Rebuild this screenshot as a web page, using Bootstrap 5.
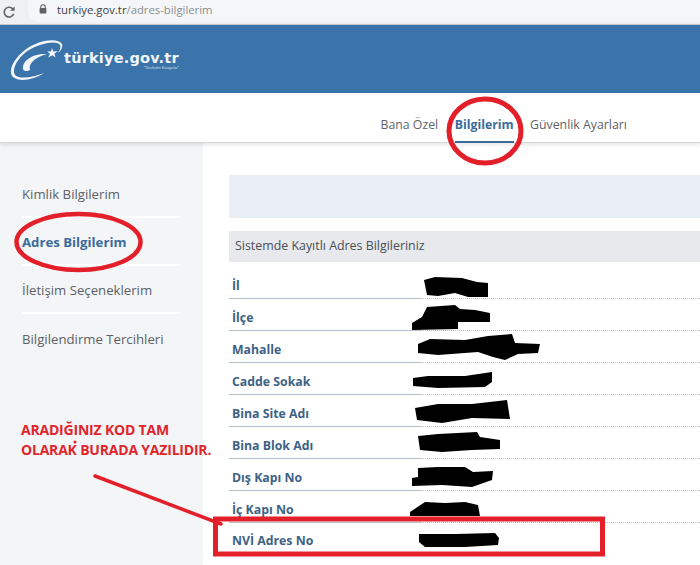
<!DOCTYPE html>
<html lang="en">
<head>
  <title>Adres Bilgilerim</title>
  <meta charset="UTF-8" />
  <link href="https://cdn.jsdelivr.net/npm/bootstrap@5.3.7/dist/css/bootstrap.min.css" rel="stylesheet">
  <style>
    html, body { height: 565px; overflow: hidden; }
    body { font-family: "Open Sans", sans-serif; background: #fff; position: relative; width: 700px; }

    .chrome-bar { height: 25px; background: #eef0f2; border-bottom: 1px solid #c4c7cb; }
    .chrome-reload { width: 28px; padding-left: 2px; }
    .omnibox { height: 23px; background: #f5f6f7; border-radius: 0 0 0 12px; padding-left: 29px; margin-top: -1px; font-size: 11.3px; color: #8a8d91; }
    .omnibox b { font-weight: 400; color: #3c4043; }
    .lock-icon { left: 11px; top: 5px; }

    .site-head { height: 68px; background: #3a74ab; padding-left: 10px; }
    .brand-box { margin-top: 2px; }
    .brand-name { font-family: "DejaVu Sans", sans-serif; font-weight: 700; font-size: 14.5px; line-height: 15px; letter-spacing: .2px; color: #f2f6fa; }
    .brand-sub { font-size: 4px; line-height: 4px; color: #e4ecf4; text-align: right; }

    .tab-bar { height: 50px; border-bottom: 1px solid #d5d7da; box-shadow: 0 2px 4px rgba(0,0,0,.1); padding-left: 372px; position: relative; font-size: 12.3px; }
    .tab-item { padding: 16px 8.5px 0; color: #5f6368; display: flex; align-items: center; }
    .tab-item.is-on { color: #3a6b9c; font-weight: 700; font-size: 12.3px; padding: 17px 0 0; margin: 0 8px -1px; border-bottom: 2px solid #3a6b9c; }

    .page-body { height: 422px; }
    .side-menu { width: 203px; background: #f4f5f7; padding: 27px 23px 0 22px; font-size: 13.2px; color: #5c6166; }
    .side-link { height: 48px; padding-top: 3px; display: flex; align-items: center; border-bottom: 2px solid #fff; }
    .side-link:last-child { border-bottom: 0; }
    .side-link.is-on { color: #3a6b9c; font-weight: 700; }

    .main-pane { padding: 32px 0 0 26px; }
    .info-strip { height: 43px; background: #e9eef5; }
    .title-strip { height: 31px; margin-top: 13px; background: #e7e9ec; color: #4a4f54; font-size: 12.4px; padding-left: 6px; }
    .addr-list { margin-top: 5px; }
    .addr-row { height: 32px; font-size: 12.3px; font-weight: 700; color: #3d6285; padding: 0 0 3px 3px; border-bottom: 1px dotted #b5bcc3; position: relative; display: flex; align-items: flex-end; }
    .addr-row::after { content: ""; position: absolute; left: 0; bottom: -1px; width: 192px; border-bottom: 1px solid #b4c0cc; }
    .addr-row:last-child { border-bottom: 0; padding-bottom: 5px; }
    .addr-row:last-child::after { display: none; }

    .note-text { position: absolute; left: 21px; top: 420px; color: #e0252c; font-size: 14px; font-weight: 700; line-height: 19.5px; letter-spacing: -.2px; }
    .mark-layer { position: absolute; left: 0; top: 0; pointer-events: none; }
  </style>
</head>
<body>

  <div class="chrome-bar d-flex">
    <div class="chrome-reload d-flex align-items-center">
      <svg width="14" height="14" viewBox="0 0 16 16"><path d="M13 5.4A5.6 5.6 0 1 0 13.4 10" fill="none" stroke="#5f6368" stroke-width="1.8"/><path d="M14.4 1.6V6.6H9.4Z" fill="#5f6368"/></svg>
    </div>
    <div class="omnibox flex-grow-1 d-flex align-items-center position-relative">
      <svg class="position-absolute lock-icon" width="8" height="10" viewBox="0 0 8 10"><path d="M1.8 4.5V2.9a2.2 2.2 0 0 1 4.4 0V4.5" fill="none" stroke="#5f6368" stroke-width="1.1"/><rect x=".6" y="4.1" width="6.8" height="5.4" rx=".7" fill="#5f6368"/></svg>
      <span><b>turkiye.gov.tr</b>/adres-bilgilerim</span>
    </div>
  </div>

  <div class="site-head d-flex align-items-center">
    <svg width="54" height="46" viewBox="10 36 54 46">
      <path d="M62 44C58 38 40 39 25 50C12 60 8 72 13 77C20 83 35 79 44 73C34 77 20 80 15 75C11 69 19 56 29 50C42 43 56 40 60 45C61 47 60 50 58 53C61 51 63 47 62 44Z" fill="#f2f6fa"/>
      <path d="M47 54C34 53 22 60 23 69C24 72 28 71 30 70C28 63 36 57 47 54Z" fill="#f2f6fa"/>
      <path d="M52 48l1.2 3.6 4.6-.6-3.4 2.8 1.2 3.6-3.2-2.2-4.2 2.2 1.8-3.6-3-2.6 4 .2Z" fill="#f2f6fa"/>
    </svg>
    <div class="brand-box">
      <div class="brand-name">türkiye.gov.tr</div>
      <div class="brand-sub">"Devletin Kısayolu"</div>
    </div>
  </div>

  <div class="tab-bar d-flex">
    <div class="tab-item">Bana Özel</div>
    <div class="tab-item is-on">Bilgilerim</div>
    <div class="tab-item">Güvenlik Ayarları</div>
  </div>

  <div class="page-body d-flex">
    <div class="side-menu">
      <div class="side-link">Kimlik Bilgilerim</div>
      <div class="side-link is-on">Adres Bilgilerim</div>
      <div class="side-link">İletişim Seçeneklerim</div>
      <div class="side-link">Bilgilendirme Tercihleri</div>
    </div>
    <div class="main-pane flex-grow-1">
      <div class="info-strip"></div>
      <div class="title-strip d-flex align-items-center">Sistemde Kayıtlı Adres Bilgileriniz</div>
      <div class="addr-list">
        <div class="addr-row">İl</div>
        <div class="addr-row">İlçe</div>
        <div class="addr-row">Mahalle</div>
        <div class="addr-row">Cadde Sokak</div>
        <div class="addr-row">Bina Site Adı</div>
        <div class="addr-row">Bina Blok Adı</div>
        <div class="addr-row">Dış Kapı No</div>
        <div class="addr-row">İç Kapı No</div>
        <div class="addr-row">NVİ Adres No</div>
      </div>
    </div>
  </div>

  <div class="note-text">ARADIĞINIZ KOD TAM<br>OLARAK BURADA YAZILIDIR.</div>

  <svg class="mark-layer" width="700" height="565" viewBox="0 0 700 565">
    <!-- redacted values -->
    <g fill="#000">
      <path d="M424 280L435 277L462 278L477 282L488 283L488 297L468 297L455 293L438 296L427 295Z"/>
      <path d="M427 307L455 305L460 309L475 310L490 313L490 322L458 322L458 329L412 330L412 323L422 317Z"/>
      <path d="M418 344L430 339L465 340L488 336L512 334L515 343L540 344L538 353L518 354L505 360L493 357L478 352L438 355L418 353Z"/>
      <path d="M413 378L428 376L465 376L492 372L492 382L485 387L438 388L413 386Z"/>
      <path d="M415 408L438 404L472 404L507 400L510 419L472 418L442 423L417 420Z"/>
      <path d="M418 436L438 434L477 432L480 437L500 440L500 449L472 450L442 452L420 450Z"/>
      <path d="M418 468L438 467L465 467L473 472L493 471L492 480L472 487L442 485L412 486L412 478L418 477Z"/>
      <path d="M410 512L425 502L445 503L465 502L478 505L480 516L410 516Z"/>
      <path d="M419 534L455 534L495 533L499 538L498 545L465 547L425 547L419 542Z"/>
    </g>
    <!-- hand drawn markup -->
    <g fill="none" stroke="#e3202a">
      <ellipse cx="485" cy="131" rx="36" ry="32" stroke-width="5"/>
      <ellipse cx="78.5" cy="242" rx="62" ry="28" stroke-width="4.5"/>
      <path d="M95 476L221 524" stroke-width="3.5" stroke-linecap="round"/>
      <rect x="215.5" y="519" width="387" height="35" stroke-width="5"/>
    </g>
    <circle cx="75" cy="442" r="1.5" fill="#e3202a"/>
  </svg>

  <script src="https://cdn.jsdelivr.net/npm/bootstrap@5.3.7/dist/js/bootstrap.bundle.min.js"></script>
</body>
</html>
